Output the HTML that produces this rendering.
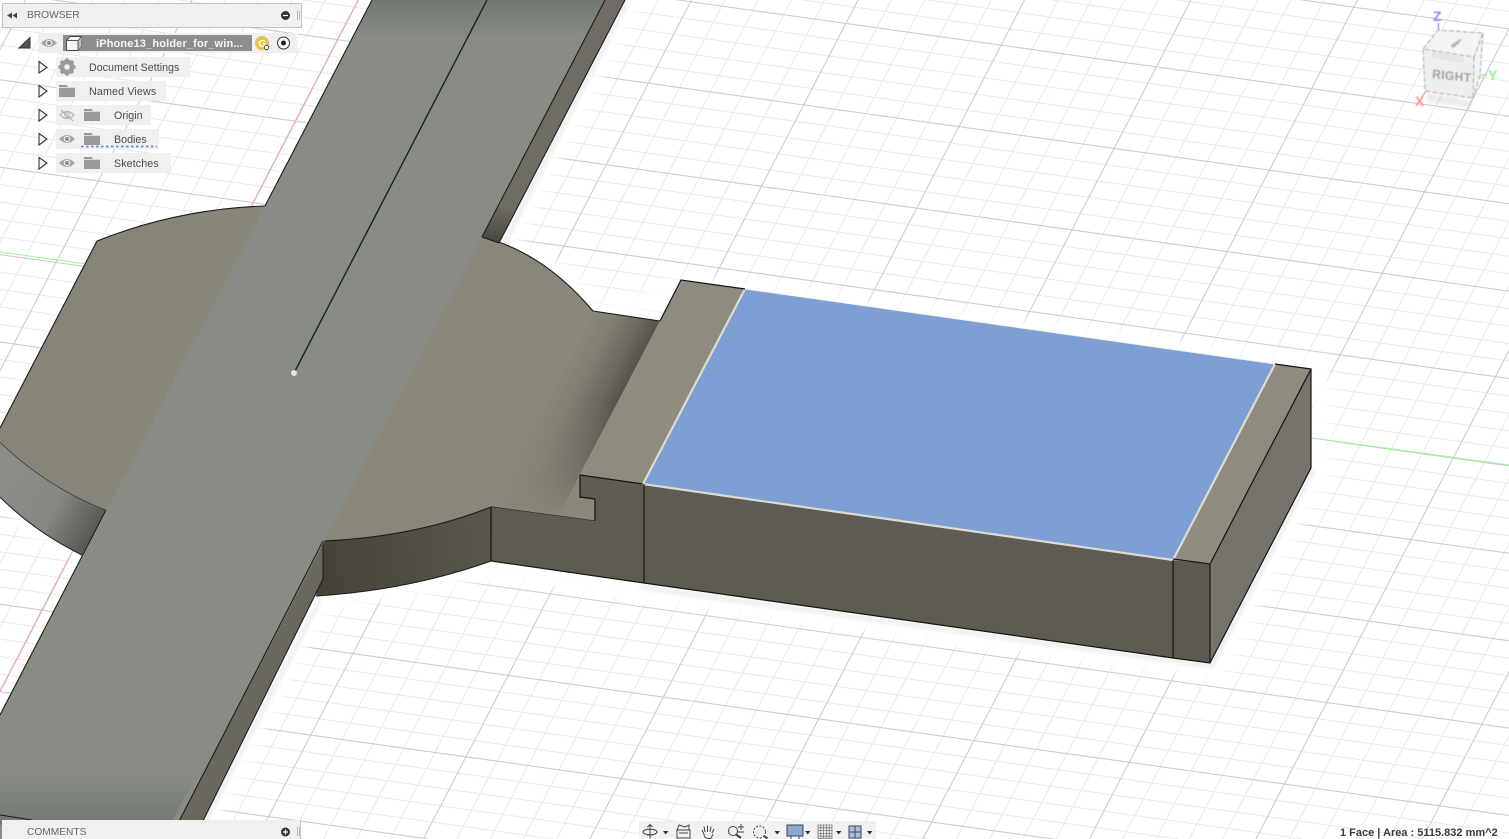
<!DOCTYPE html>
<html><head><meta charset="utf-8"><style>
html,body{margin:0;padding:0;background:#fff;width:1509px;height:839px;overflow:hidden}
body{position:relative;font-family:"Liberation Sans",Arial,sans-serif}
svg{position:absolute;left:0;top:0}
.t{position:absolute;font-size:10.7px;color:#4a4a55;white-space:nowrap;line-height:14px}
.r{position:absolute;background:#f0f0f0;height:20px}
</style></head><body>
<svg width="1509" height="839" viewBox="0 0 1509 839">
<defs>
<filter id="b6" x="-20%" y="-20%" width="140%" height="140%"><feGaussianBlur stdDeviation="5"/></filter>
<filter id="b2" x="-20%" y="-20%" width="140%" height="140%"><feGaussianBlur stdDeviation="2"/></filter>
<filter id="b05" x="-30%" y="-30%" width="160%" height="160%"><feGaussianBlur stdDeviation=".5"/></filter>
<linearGradient id="ao" gradientUnits="userSpaceOnUse" x1="620" y1="398" x2="563" y2="368.5">
<stop offset="0" stop-color="#55524c"/><stop offset=".3" stop-color="#55524c" stop-opacity=".55"/><stop offset=".65" stop-color="#55524c" stop-opacity=".16"/><stop offset="1" stop-color="#55524c" stop-opacity="0"/>
</linearGradient>
<linearGradient id="aoFade" gradientUnits="userSpaceOnUse" x1="0" y1="400" x2="0" y2="518">
<stop offset="0" stop-color="#fff"/><stop offset=".65" stop-color="#666"/><stop offset="1" stop-color="#000"/>
</linearGradient>
<mask id="aoMask" maskUnits="userSpaceOnUse" x="400" y="250" width="300" height="300"><rect x="400" y="250" width="300" height="300" fill="url(#aoFade)"/></mask>
<linearGradient id="disc" gradientUnits="userSpaceOnUse" x1="60" y1="300" x2="560" y2="420">
<stop offset="0" stop-color="#878478"/><stop offset="1" stop-color="#8b877b"/>
</linearGradient>
<linearGradient id="wallL" gradientUnits="userSpaceOnUse" x1="0" y1="470" x2="105" y2="530">
<stop offset="0" stop-color="#8b8e88"/><stop offset=".55" stop-color="#858780"/><stop offset="1" stop-color="#4f5049"/>
</linearGradient>
<linearGradient id="wallR" gradientUnits="userSpaceOnUse" x1="323" y1="560" x2="491" y2="530">
<stop offset="0" stop-color="#45433c"/><stop offset="1" stop-color="#5a574e"/>
</linearGradient>
<linearGradient id="barTop" x1="0" y1="0" x2="0" y2="1">
<stop offset="0" stop-color="#747873"/><stop offset="1" stop-color="#747873" stop-opacity="0"/>
</linearGradient>
<linearGradient id="barBot" x1="0" y1="0" x2="0" y2="1">
<stop offset="0" stop-color="#6c706b" stop-opacity="0"/><stop offset="1" stop-color="#6c706b"/>
</linearGradient>
<linearGradient id="wallN" gradientUnits="userSpaceOnUse" x1="0" y1="205" x2="0" y2="243">
<stop offset="0" stop-color="#6f6c64"/><stop offset="1" stop-color="#47453f"/>
</linearGradient>
<clipPath id="discClip"><path d="M97 241Q177 209 265 206L482 237Q543 252 593 311L660 321L580 475V497L595 499V521L491 507Q415 537 323 541L106 510Q47 487 0 442V428Z"/></clipPath>
</defs>
<rect width="1509" height="839" fill="#fff"/>
<!-- grid minor -->
<path fill="none" stroke="#e9e9e9" stroke-width="1" d="M25.5 0l-434.6 839m467.9-839l-434.6 839m467.9-839l-434.6 839m467.9-839l-434.6 839m467.9-839l-434.6 839m467.9-839l-434.6 839m467.9-839l-434.6 839m467.9-839l-434.6 839m467.9-839l-434.6 839m467.9-839l-434.6 839m467.9-839l-434.6 839m467.9-839l-434.6 839m467.9-839l-434.6 839m467.9-839l-434.6 839m467.9-839l-434.6 839m467.9-839l-434.6 839m467.9-839l-434.6 839m467.9-839l-434.6 839m467.9-839l-434.6 839m467.9-839l-434.6 839m467.9-839l-434.6 839m467.9-839l-434.6 839m467.9-839l-434.6 839m467.9-839l-434.6 839m467.9-839l-434.6 839m467.9-839l-434.6 839m467.9-839l-434.6 839m467.9-839l-434.6 839m467.9-839l-434.6 839m467.9-839l-434.6 839m467.9-839l-434.6 839m467.9-839l-434.6 839m467.9-839l-434.6 839m467.9-839l-434.6 839m467.9-839l-434.6 839m467.9-839l-434.6 839m467.9-839l-434.6 839m467.9-839l-434.6 839m467.9-839l-434.6 839m467.9-839l-434.6 839m467.9-839l-434.6 839m467.9-839l-434.6 839m467.9-839l-434.6 839m467.9-839l-434.6 839m467.9-839l-434.6 839m467.9-839l-434.6 839m467.9-839l-434.6 839m467.9-839l-434.6 839m467.9-839l-434.6 839m467.9-839l-434.6 839m467.9-839l-434.6 839m467.9-839l-434.6 839m467.9-839l-434.6 839m467.9-839l-434.6 839m467.9-839l-434.6 839m467.9-839l-434.6 839m467.9-839l-434.6 839"/>
<path fill="none" stroke="#e9e9e9" stroke-width="1" d="M0-199.9l1509 211.3m-1509-193.82l1509 211.3m-1509-193.82l1509 211.3m-1509-193.82l1509 211.3m-1509-193.82l1509 211.3m-1509-193.82l1509 211.3m-1509-193.82l1509 211.3m-1509-193.82l1509 211.3m-1509-193.82l1509 211.3m-1509-193.82l1509 211.3m-1509-193.82l1509 211.3m-1509-193.82l1509 211.3m-1509-193.82l1509 211.3m-1509-193.82l1509 211.3m-1509-193.82l1509 211.3m-1509-193.82l1509 211.3m-1509-193.82l1509 211.3m-1509-193.82l1509 211.3m-1509-193.82l1509 211.3m-1509-193.82l1509 211.3m-1509-193.82l1509 211.3m-1509-193.82l1509 211.3m-1509-193.82l1509 211.3m-1509-193.82l1509 211.3m-1509-193.82l1509 211.3m-1509-193.82l1509 211.3m-1509-193.82l1509 211.3m-1509-193.82l1509 211.3m-1509-193.82l1509 211.3m-1509-193.82l1509 211.3m-1509-193.82l1509 211.3m-1509-193.82l1509 211.3m-1509-193.82l1509 211.3m-1509-193.82l1509 211.3m-1509-193.82l1509 211.3m-1509-193.82l1509 211.3m-1509-193.82l1509 211.3m-1509-193.82l1509 211.3m-1509-193.82l1509 211.3m-1509-193.82l1509 211.3m-1509-193.82l1509 211.3m-1509-193.82l1509 211.3m-1509-193.82l1509 211.3m-1509-193.82l1509 211.3m-1509-193.82l1509 211.3m-1509-193.82l1509 211.3m-1509-193.82l1509 211.3m-1509-193.82l1509 211.3M0 639.1L1428 839M0 656.6L1303 839M0 674.1L1178 839M0 691.5L1053 839M0 709L928 839M0 726.5L803 839M0 744L678 839M0 761.4L553 839M0 778.9L428 839M0 796.4L303 839M0 813.9L178 839M0 831.4L54 839"/>
<!-- grid major -->
<path fill="none" stroke="#cbcbcb" stroke-width="1" d="M25.5 0l-434.6 839m601.1-839l-434.6 839m601.1-839l-434.6 839m601.1-839l-434.6 839m601.1-839l-434.6 839m601.1-839l-434.6 839m601.1-839l-434.6 839m601.1-839l-434.6 839m601.1-839l-434.6 839m601.1-839l-434.6 839m601.1-839l-434.6 839m601.1-839l-434.6 839m601.1-839l-434.6 839"/>
<path fill="none" stroke="#cbcbcb" stroke-width="1" d="M0-182.4l1509 211.3m-1509-123.9l1509 211.3m-1509-123.9l1509 211.3m-1509-123.9l1509 211.3m-1509-123.9l1509 211.3m-1509-123.9l1509 211.3m-1509-123.9l1509 211.3m-1509-123.9l1509 211.3m-1509-123.9l1509 211.3m-1509-123.9l1509 211.3M0 691.6L1053 839M0 779L428 839"/>

<!-- soft halo around body -->
<g filter="url(#b6)" fill="none" stroke="#fff" stroke-width="18">
<path d="M632 0L505 245Q560 262 600 318L690 285L1320 369V470L1214 670L490 570L320 602L205 825"/>
</g>
<g filter="url(#b2)" fill="none" stroke="#000" stroke-opacity=".1" stroke-width="3">
<path d="M628 0L503 245M1313 470L1212 666L640 587M320 600L203 825"/>
</g>
<g filter="url(#b6)" fill="none" stroke="#fff" stroke-width="10"><path d="M0 505Q40 535 85 560"/></g>
<path d="M0 252L100 266M1312 438L1509 465" stroke="#9af79a" stroke-width="1" fill="none"/>
<path d="M358 0L0 691" stroke="#f9a0a0" stroke-width="1" fill="none"/>

<!-- left curved wall -->
<path d="M0 442Q47 487 106 510L82 555Q35 532 0 497Z" fill="url(#wallL)"/>
<path d="M0 442Q47 487 106 510M82 555Q35 532 0 497" fill="none" stroke="#1c1c1a" stroke-width="1"/>
<!-- right curved wall -->
<path d="M323 541Q415 537 491 507V561Q410 590 316 596Z" fill="url(#wallR)"/>
<path d="M316 596Q410 590 491 561" fill="none" stroke="#1c1c1a" stroke-width="1"/>
<!-- disc top -->
<path d="M97 241Q177 209 265 206L482 237Q543 252 593 311L660 321L580 475V497L595 499V521L491 507Q415 537 323 541L106 510Q47 487 0 442V428Z" fill="url(#disc)"/>
<g clip-path="url(#discClip)"><g mask="url(#aoMask)">
<path d="M660 321L551 530L440 530L560 290L640 290Z" fill="url(#ao)"/>
</g></g>
<path d="M0 428L97 241Q177 209 265 206M482 237Q543 252 593 311L660 321M580 475V497L595 499V521L491 507Q415 537 323 541" fill="none" stroke="#1c1c1a" stroke-width="1.1"/>

<!-- front wall -->
<path d="M491 507L595 521V499L580 497V475L1173 560V658L644 583L491 561Z" fill="#5e5b52"/>
<path d="M1173 560L1210 564V663L1173 658Z" fill="#5b5950"/>
<path d="M1210 564L1311 369V468L1210 663Z" fill="#76736a"/>
<!-- top -->
<path d="M681 280L1311 369L1210 564L580 475Z" fill="#8f8b7e"/>
<path d="M745 289L1275 364L1173 560L643 484Z" fill="#7e9fd3"/>
<path d="M745 289L643 484L1173 560L1275 364" fill="none" stroke="#dedbd2" stroke-width="2.2"/>
<path d="M745 289L1275 364" fill="none" stroke="#f4f4f4" stroke-width=".8"/>
<path d="M660 321L681 280L745 289M1275 364L1311 369L1210 564L1173 559M580 475L643 484" fill="none" stroke="#151513" stroke-width="1.2"/>
<path d="M1311 369V468L1210 663L1173 658L644 583L491 561V507M1210 564V663M1173 560V658M644 484V583M580 475V497L595 499V521" fill="none" stroke="#151513" stroke-width="1.2"/>

<!-- long bar side walls -->
<path d="M605 0H625L499 243L482 237Z" fill="#6f6c64"/>
<path d="M482 237L499 243L515 212L498 205Z" fill="url(#wallN)"/>
<path d="M625 0L499 243L482 237" fill="none" stroke="#1c1c1a" stroke-width="1.1"/>
<path d="M323 541V579L194 839H170Z" fill="#6a675f"/>
<path d="M323 541V579L194 839" fill="none" stroke="#1c1c1a" stroke-width="1.1"/>
<!-- long bar top -->
<path d="M372 0H605L170 839H0V715Z" fill="#888c85"/>
<path d="M372 0H605L584 40H351Z" fill="url(#barTop)"/>
<path d="M0 770H199L170 825H0Z" fill="url(#barBot)" opacity=".7"/>
<path d="M372 0L265 206M106 510L0 715M605 0L482 237M323 541L170 839" fill="none" stroke="#1c1c1a" stroke-width="1.1"/>
<path d="M0 815L32 820" stroke="#1c1c1a" stroke-width="1.1"/>
<path d="M487 0L294 373" stroke="#1b2222" stroke-width="1.4"/>
<circle cx="294" cy="373" r="3" fill="#dfe5e5"/>

<!-- view cube -->
<g>
<path d="M1425 92L1473 100L1482 76L1492 60L1470 108L1428 102Z" fill="#000" opacity=".08" filter="url(#b2)"/>
<path d="M1423 49L1438 30L1483 33L1474 57Z" fill="#f4f4f4"/>
<path d="M1423 49L1474 57L1473 98L1425 91Z" fill="#eeeeee"/>
<path d="M1474 57L1483 33L1480 75L1473 98Z" fill="#f2f2f2"/>
<path d="M1432 52L1464 57V63L1432 58Z" fill="#e4e4e6"/>
<g fill="none" stroke="#aaa" stroke-width="1" stroke-dasharray="5 2" filter="url(#b05)">
<path d="M1423 49L1438 30L1483 33L1474 57L1423 49L1425 91L1473 98L1474 57M1483 33L1480 75L1473 98"/>
</g>
<path d="M1451 45l9-6 2 1-3 2 1 1-4 2 1 1-5 2z" fill="#b5b5b5" filter="url(#b05)"/>
<text transform="translate(1432 78) rotate(6) skewX(2)" font-family="Liberation Sans" font-size="12" font-weight="bold" fill="#a0a2a8" letter-spacing=".4" filter="url(#b05)">RIGHT</text>
<path d="M1438.5 23V30" stroke="#a0a0ff" stroke-width="1.4"/>
<path d="M1480 75H1487" stroke="#9ff09f" stroke-width="1.4"/>
<path d="M1426 91L1422 97" stroke="#ff9c9c" stroke-width="1.4"/>
<text x="1433" y="21" font-family="Liberation Sans" font-size="14" font-weight="bold" fill="#8a8aff" filter="url(#b05)">Z</text>
<text x="1488" y="80" font-family="Liberation Sans" font-size="14" font-weight="bold" fill="#8fee8f" filter="url(#b05)">Y</text>
<text x="1415" y="106" font-family="Liberation Sans" font-size="14" font-weight="bold" fill="#ff9090" filter="url(#b05)">X</text>
</g>
</svg>

<!-- Browser panel -->
<div style="position:absolute;left:2px;top:3px;width:298px;height:23px;background:#f0f0f0;border:1px solid #c4c4c4"></div>
<div class="t" style="left:27px;top:9px;font-size:10.2px;color:#666670">BROWSER</div>
<div class="r" style="left:38px;top:33px;width:260px"></div>
<div style="position:absolute;left:63px;top:35px;width:189px;height:16px;background:#8d8d8d"></div>
<div class="t" style="left:96px;top:37px;font-size:11px;font-weight:bold;color:#f5f5f5;letter-spacing:.15px">iPhone13_holder_for_win...</div>
<div class="r" style="left:56px;top:57px;width:134px"></div>
<div class="r" style="left:56px;top:81px;width:110px"></div>
<div class="r" style="left:56px;top:105px;width:95px"></div>
<div class="r" style="left:56px;top:129px;width:103px"></div>
<div class="r" style="left:56px;top:153px;width:115px"></div>
<div class="t" style="left:89px;top:61px">Document Settings</div>
<div class="t" style="left:89px;top:85px;letter-spacing:.15px">Named Views</div>
<div class="t" style="left:114px;top:109px">Origin</div>
<div class="t" style="left:114px;top:133px">Bodies</div>
<div class="t" style="left:114px;top:157px;letter-spacing:.1px">Sketches</div>

<!-- Comments panel -->
<div style="position:absolute;left:2px;top:820px;width:299px;height:19px;background:#f0f0f0;border-right:1px solid #c4c4c4;box-sizing:border-box"></div>
<div class="t" style="left:27px;top:827px;font-size:10.2px;color:#666670;line-height:12px">COMMENTS</div>

<!-- toolbar bg -->
<div style="position:absolute;left:639px;top:821px;width:237px;height:18px;background:#f1f1f1"></div>
<div class="t" style="left:1340px;top:828px;font-size:11px;font-weight:bold;color:#3a3a3a;width:165px;text-align:left;line-height:11px;height:11px">1 Face | Area : 5115.832 mm^2</div>

<svg width="1509" height="839" viewBox="0 0 1509 839" style="pointer-events:none">
<!-- header icons -->
<path d="M7 15.5L12 12.5V18.5ZM12.5 15.5L17 12.5V18.5Z" fill="#444"/>
<circle cx="285.5" cy="15.5" r="4.5" fill="#333"/><path d="M283 15.5H288" stroke="#fff" stroke-width="1.2"/>
<path d="M297.5 11V20M299.5 11V20" stroke="#aaa" stroke-width=".8"/>
<circle cx="285.5" cy="832" r="4.5" fill="#333"/><path d="M283 832H288M285.5 829.5V834.5" stroke="#fff" stroke-width="1.2"/>
<path d="M297.5 827V836M299.5 827V836" stroke="#aaa" stroke-width=".8"/>
<!-- tree arrows -->
<path d="M19 48L30 37.5V48Z" fill="#555" stroke="#333" stroke-width="1"/>
<g fill="#f8f8f8" stroke="#333" stroke-width="1.1">
<path d="M39 61.5L47 67.5L39 73Z"/><path d="M39 85.5L47 91L39 97Z"/><path d="M39 109.5L47 115L39 121Z"/><path d="M39 133.5L47 139L39 145Z"/><path d="M39 157.5L47 163L39 169Z"/>
</g>
<!-- eyes -->
<path d="M41 43Q49 35 57 43Q49 51 41 43Z" fill="#a5a5a5"/><circle cx="49" cy="43" r="3.2" fill="#f0f0f0"/><circle cx="49" cy="43" r="2" fill="#909090"/>
<path d="M59 139Q67 131 75 139Q67 147 59 139Z" fill="#a5a5a5"/><circle cx="67" cy="139" r="3.2" fill="#f0f0f0"/><circle cx="67" cy="139" r="2" fill="#909090"/>
<path d="M59 163Q67 155 75 163Q67 171 59 163Z" fill="#a5a5a5"/><circle cx="67" cy="163" r="3.2" fill="#f0f0f0"/><circle cx="67" cy="163" r="2" fill="#909090"/>
<path d="M60 115Q67 108 74 115Q67 122 60 115Z" fill="none" stroke="#aaa" stroke-width="1"/><circle cx="67" cy="115" r="2.2" fill="none" stroke="#aaa"/><path d="M61 110L73 121" stroke="#aaa" stroke-width="1"/>
<!-- component cube -->
<path d="M66.5 40.5L70 36.5H81.5V46L78 50.5H68Q66.5 50.5 66.5 49Z" fill="#f4f4f4" stroke="#444" stroke-width=".9"/><path d="M78 40.5L81.5 36.5V46L78 50.5Z" fill="#bbb"/><path d="M66.5 40.5H78V50.5M78 40.5L81.5 36.5" fill="none" stroke="#555" stroke-width=".9"/>
<!-- badges -->
<circle cx="262" cy="43" r="7" fill="#e5c544"/><text x="258.5" y="47" font-family="Liberation Sans" font-size="10" font-weight="bold" fill="#fff">G</text><circle cx="266.5" cy="47.5" r="2.2" fill="#fff" stroke="#333" stroke-width=".8"/>
<circle cx="283.5" cy="43" r="6" fill="#f8f8f8" stroke="#333" stroke-width="1"/><circle cx="283.5" cy="43" r="2.5" fill="#222"/>
<!-- gear -->
<g transform="translate(67 67)" fill="#999">
<circle r="5.5" fill="none" stroke="#999" stroke-width="3.5"/>
<path d="M-1.8-8.5H1.8V8.5H-1.8Z"/><path d="M-1.8-8.5H1.8V8.5H-1.8Z" transform="rotate(45)"/><path d="M-1.8-8.5H1.8V8.5H-1.8Z" transform="rotate(90)"/><path d="M-1.8-8.5H1.8V8.5H-1.8Z" transform="rotate(135)"/>
<circle r="2.8" fill="#f0f0f0"/>
</g>
<!-- folders -->
<g fill="#999">
<path d="M59 85H66.5L68 87H75V97H59Z"/>
<path d="M84 109H91.5L93 111H100V121H84Z"/>
<path d="M84 133H91.5L93 135H100V145H84Z"/>
<path d="M84 157H91.5L93 159H100V169H84Z"/>
</g>
<path d="M59 87.5H75M84 111.5H100M84 135.5H100M84 159.5H100" stroke="#f0f0f0" stroke-width=".8"/>
<path d="M81 146.5L157 146.5" stroke="#6f87b5" stroke-width="1.8" stroke-dasharray="2.5 2.5"/>
<!-- toolbar icons -->
<g fill="none" stroke="#444" stroke-width="1">
<ellipse cx="650" cy="832" rx="7" ry="2.8"/><path d="M650 825V838.5M647.5 827L650 824.5L652.5 827M647 835H653"/>
<path d="M677 830H690V838H677ZM679 833H688M677 830L679 825L685 827L689 825V830"/>
<path d="M704 834L702 830M705 832L704 826.5M707.5 832V825.5M710 832L711 826.5M712 833L714 829M704 834Q704 838 708 838.5H711L713 834"/>
<circle cx="733" cy="831" r="4.5"/><path d="M736 834.5L741 838" stroke-width="2"/><path d="M738 827H744M741 824V830M738 832H744"/>
<circle cx="759.5" cy="832" r="6" stroke-dasharray="2 1.5"/><path d="M764 836L767.5 838.5" stroke-width="2"/>
</g>
<path d="M787 825H803V836H787Z" fill="#8aa9d6" stroke="#444" stroke-width="1"/><path d="M791 836V839M799 836V839" stroke="#444"/>
<g fill="none" stroke="#777" stroke-width=".8"><path d="M818 825H832V838.5H818ZM820.8 825V838.5M823.6 825V838.5M826.4 825V838.5M829.2 825V838.5M818 827.8H832M818 830.6H832M818 833.4H832M818 836.2H832"/></g>
<path d="M849 826H861V838H849Z" fill="#a9c0e3" stroke="#445" stroke-width="1"/><path d="M855 826V838M849 832H861" stroke="#445" stroke-width="1"/>
<g fill="#333"><path d="M663 831H668.5L665.7 834.5Z"/><path d="M774.5 831H780L777.2 834.5Z"/><path d="M805 831H810.5L807.7 834.5Z"/><path d="M836 831H841.5L838.7 834.5Z"/><path d="M867 831H872.5L869.7 834.5Z"/></g>
</svg>
</body></html>
